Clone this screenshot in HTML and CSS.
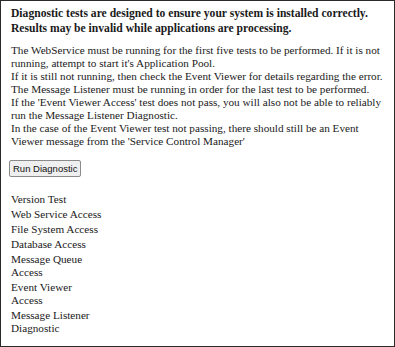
FILE: index.html
```html
<!DOCTYPE html>
<html lang="en">
<head>
    <meta charset="UTF-8">
    <title>Diagnostics</title>
    <link rel="stylesheet" href="styles.css">
</head>
<body>
    <div class="panel">
        <p class="intro">
            Diagnostic tests are designed to ensure your system is installed correctly.<br>
            Results may be invalid while applications are processing.
        </p>

        <p class="notes">
            The WebService must be running for the first five tests to be performed. If it is not<br>
            running, attempt to start it's Application Pool.<br>
            If it is still not running, then check the Event Viewer for details regarding the error.<br>
            The Message Listener must be running in order for the last test to be performed.<br>
            If the 'Event Viewer Access' test does not pass, you will also not be able to reliably<br>
            run the Message Listener Diagnostic.<br>
            In the case of the Event Viewer test not passing, there should still be an Event<br>
            Viewer message from the 'Service Control Manager'
        </p>

        <button class="run-btn">Run Diagnostic</button>

        <div class="tests">
            <div class="test">Version Test</div>
            <div class="test">Web Service Access</div>
            <div class="test">File System Access</div>
            <div class="test">Database Access</div>
            <div class="test">Message Queue Access</div>
            <div class="test">Event Viewer Access</div>
            <div class="test">Message Listener Diagnostic</div>
        </div>
    </div>
</body>
</html>
```

FILE: styles.css
```css
html, body {
    margin: 0;
    padding: 0;
    background: white;
}

.panel {
    box-sizing: border-box;
    width: 395px;
    height: 347px;
    border: 1.5px solid #2a2a2a;
    padding: 5px 10px;
    font-family: 'Liberation Serif', serif;
    font-size: 11.2px;
    line-height: 13px;
    color: #1a1a1a;
    overflow: hidden;
}

.intro {
    font-weight: bold;
    font-size: 11.6px;
    line-height: 15px;
    margin: 0 0 8px 0;
    white-space: nowrap;
}

.notes {
    margin: 0 0 12px 0;
    white-space: nowrap;
}

.run-btn {
    display: block;
    font-family: 'Liberation Sans', Arial, sans-serif;
    font-size: 9.5px;
    padding: 2px 3px;
    background: #efefef;
    border: 1px solid #8a8a8a;
    border-radius: 2px;
    color: #111;
    margin-left: -2px;
}

.tests {
    width: 93px;
    margin-top: 16px;
}

.test {
    margin-bottom: 2px;
}
```
